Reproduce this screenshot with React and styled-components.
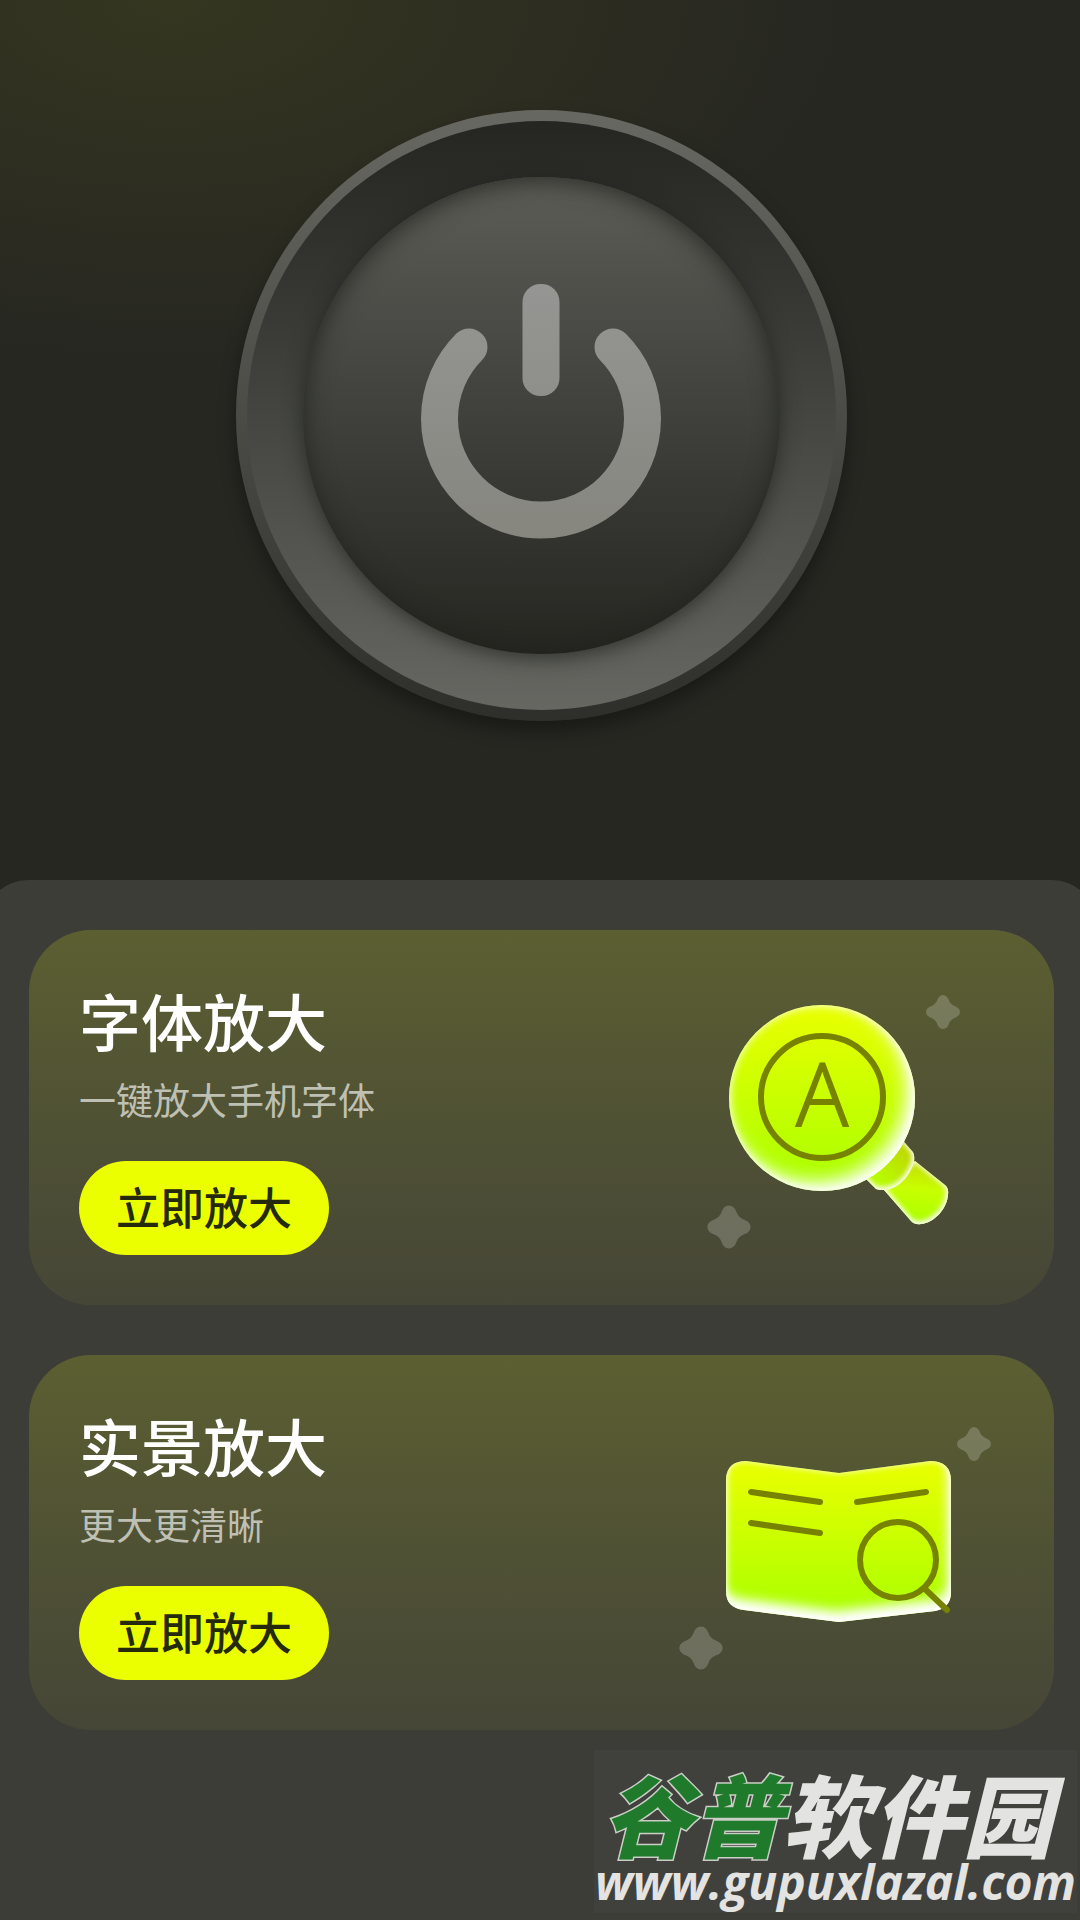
import React from "react";
import styled, { createGlobalStyle } from "styled-components";

const features = [
  {
    id: 1,
    title: "字体放大",
    desc: "一键放大手机字体",
    action: "立即放大",
    art: "font",
  },
  {
    id: 2,
    title: "实景放大",
    desc: "更大更清晰",
    action: "立即放大",
    art: "book",
  },
];

const STAR =
  "M0 -17C3 -17 5 -14.5 6 -11.5C7 -9 9 -7 11.5 -6C14.5 -5 17 -3 17 0C17 3 14.5 5 11.5 6C9 7 7 9 6 11.5C5 14.5 3 17 0 17C-3 17 -5 14.5 -6 11.5C-7 9 -9 7 -11.5 6C-14.5 5 -17 3 -17 0C-17 -3 -14.5 -5 -11.5 -6C-9 -7 -7 -9 -6 -11.5C-5 -14.5 -3 -17 0 -17Z";

// inner white glow, heavier on the lower right side
const Glow = ({ id, dx, dy, blur, rim }) => (
  <filter
    id={id}
    x="-10%"
    y="-10%"
    width="120%"
    height="120%"
    colorInterpolationFilters="sRGB">
    <feOffset in="SourceAlpha" dx={dx} dy={dy} />
    <feGaussianBlur stdDeviation={blur} result="soft" />
    <feFlood floodColor="#fff" />
    <feComposite in2="soft" operator="out" />
    <feComposite in2="SourceAlpha" operator="in" result="main" />
    <feGaussianBlur in="SourceAlpha" stdDeviation={rim} result="rim" />
    <feFlood floodColor="#fff" floodOpacity="0.9" />
    <feComposite in2="rim" operator="out" />
    <feComposite in2="SourceAlpha" operator="in" result="edge" />
    <feMerge>
      <feMergeNode in="SourceGraphic" />
      <feMergeNode in="main" />
      <feMergeNode in="edge" />
    </feMerge>
  </filter>
);

const Lime = ({ id }) => (
  <linearGradient id={id} x1="0" y1="0" x2="0" y2="1">
    <stop offset="0" stopColor="#eaff00" />
    <stop offset="1" stopColor="#a8ff00" />
  </linearGradient>
);

const FontArt = () => (
  <Art viewBox="0 0 360 375" aria-hidden="true">
    <defs>
      <Lime id="lensFill" />
      <linearGradient id="collarFill" x1="1" y1="0" x2="0" y2="1">
        <stop offset="0.2" stopColor="#bfd800" />
        <stop offset="0.7" stopColor="#b8fa00" />
      </linearGradient>
      <linearGradient id="gripFill" x1="0.6" y1="0" x2="0.5" y2="1">
        <stop offset="0" stopColor="#c6dc00" />
        <stop offset="0.45" stopColor="#c8ff00" />
        <stop offset="1" stopColor="#a8ff00" />
      </linearGradient>
      <Glow id="lensGlow" dx={-8} dy={-9} blur={9} rim={4} />
      <Glow id="gripGlow" dx={-1} dy={-2} blur={3} rim={3} />
    </defs>
    <path
      fill="url(#gripFill)"
      filter="url(#gripGlow)"
      d="M255 231L285 255Q289 258 288 265C287 279 274 293 261 294Q255 295 251 291L224 260Z"
    />
    <path
      fill="url(#collarFill)"
      filter="url(#gripGlow)"
      d="M238 205L252 221Q255 224 254 232C251 244 241 256 230 259Q221 261 216 259L200 243Z"
    />
    <circle cx="162" cy="168" r="93" fill="url(#lensFill)" filter="url(#lensGlow)" />
    <circle cx="162" cy="167" r="61" fill="none" stroke="#778300" strokeWidth="6" />
    <Letter x="162" y="196" textAnchor="middle">
      A
    </Letter>
    <Star d={STAR} transform="translate(283 82)" />
    <Star d={STAR} transform="translate(69 297) scale(1.27)" />
  </Art>
);

const BookArt = () => (
  <Art viewBox="0 0 360 375" aria-hidden="true">
    <defs>
      <Lime id="bookFill" />
      <Glow id="bookGlow" dx={-3} dy={-11} blur={6} rim={3} />
    </defs>
    <path
      fill="url(#bookFill)"
      filter="url(#bookGlow)"
      d="M86 106L179 118L270 106Q291 106 291 126V237Q291 253 275 256L179 267L84 255Q66 253 66 236V124Q67 106 86 106Z"
    />
    <g fill="none" stroke="#778300" strokeWidth="6" strokeLinecap="round">
      <path d="M91 137L160 147M91 168L160 178M197 147L266 137" />
      <circle cx="238" cy="205" r="38" />
      <path d="M265 234L287 255" />
    </g>
    <Star d={STAR} transform="translate(314 89)" />
    <Star d={STAR} transform="translate(41 293) scale(1.27)" />
  </Art>
);

const App = () => {
  return (
    <Page>
      <GlobalStyle />
      <Hero>
        <PowerRing type="button" aria-label="power">
          <PowerGroove>
            <PowerFace>
              <svg width="242" height="256" viewBox="0 0 242 256" aria-hidden="true">
                <defs>
                  <linearGradient
                    id="powerFill"
                    gradientUnits="userSpaceOnUse"
                    x1="0"
                    y1="0"
                    x2="0"
                    y2="256">
                    <stop offset="0" stopColor="#959593" />
                    <stop offset="1" stopColor="#86867f" />
                  </linearGradient>
                </defs>
                <g
                  fill="none"
                  stroke="url(#powerFill)"
                  strokeWidth="37"
                  strokeLinecap="round">
                  <path d="M48 64A101.5 101.5 0 1 0 192 64" />
                </g>
                <rect x="101.5" y="1" width="37" height="112" rx="18" fill="url(#powerFill)" />
              </svg>
            </PowerFace>
          </PowerGroove>
        </PowerRing>
      </Hero>
      <Panel>
        {features.map((item) => {
          const { id, title, desc, action, art } = item;
          return (
            <Card key={id}>
              <CardText>
                <Title>{title}</Title>
                <Desc>{desc}</Desc>
                <ActionButton type="button">{action}</ActionButton>
              </CardText>
              {art === "font" ? <FontArt /> : <BookArt />}
            </Card>
          );
        })}
      </Panel>
      <Watermark>
        <SiteName>
          <SiteMark>谷普</SiteMark>软件园
        </SiteName>
        <SiteUrl>www.gupuxlazal.com</SiteUrl>
      </Watermark>
    </Page>
  );
};

const GlobalStyle = createGlobalStyle`
  * {
    box-sizing: border-box;
  }
  body {
    margin: 0;
    background: #3d3d38;
    font-family: "Noto Sans CJK SC", "Noto Sans", sans-serif;
  }
  button {
    font-family: inherit;
    border: none;
    cursor: pointer;
  }
`;

const Page = styled.div`
  position: relative;
  display: flex;
  flex-direction: column;
  min-height: 100vh;
  overflow: hidden;
  background: radial-gradient(
      ellipse 680px 360px at 170px 0,
      #353620 0%,
      #2e2e21 50%,
      #262721 100%
    )
    #262721;
`;

const Hero = styled.header`
  display: flex;
  justify-content: center;
  padding: 110px 0 159px 3px;
`;

const PowerRing = styled.button`
  display: block;
  padding: 11px;
  border-radius: 50%;
  background: linear-gradient(#686862, #2e2f2a);
  box-shadow: 0 10px 18px rgba(0, 0, 0, 0.35);
`;

const PowerGroove = styled.span`
  display: block;
  padding: 56px;
  border-radius: 50%;
  background: linear-gradient(#252622, #353532 28%, #464743 52%, #666761);
`;

const PowerFace = styled.span`
  display: flex;
  align-items: center;
  justify-content: center;
  width: 477px;
  height: 477px;
  padding-bottom: 10px;
  border-radius: 50%;
  background: linear-gradient(#5c5d56, #444540 42%, #252620);
  box-shadow: 0 4px 20px rgba(30, 31, 26, 0.7),
    inset 0 4px 24px rgba(30, 31, 26, 0.8);
`;

const Panel = styled.main`
  display: flex;
  flex-direction: column;
  flex: 1;
  gap: 50px;
  margin: 0 -16px;
  padding: 50px 42px 190px 45px;
  border-radius: 44px 44px 0 0;
  background: #3d3d38;
`;

const Card = styled.section`
  display: flex;
  justify-content: space-between;
  padding: 0 34px 0 50px;
  border-radius: 62px;
  background: linear-gradient(#5c5f31, #515334 45%, #464637);
`;

const CardText = styled.div`
  display: flex;
  flex-direction: column;
  align-items: flex-start;
  padding: 50px 0;
`;

const Title = styled.h2`
  margin: 0;
  font-size: 62px;
  font-weight: 500;
  line-height: 80px;
  color: #fff;
`;

const Desc = styled.p`
  margin: 9px 0 32px;
  font-size: 37px;
  line-height: 60px;
  font-weight: 400;
  color: #bfc0b4;
`;

const ActionButton = styled.button`
  width: 250px;
  height: 94px;
  padding: 0 0 4px;
  border-radius: 47px;
  background: #ecff00;
  color: #262a0c;
  font-size: 44px;
  font-weight: 500;
  line-height: 60px;
`;

const Art = styled.svg`
  flex: none;
  width: 360px;
  height: 375px;
`;

const Letter = styled.text`
  font-family: "Open Sans", sans-serif;
  font-size: 86px;
  font-weight: 300;
  fill: #778300;
  stroke: #778300;
  stroke-width: 2px;
`;

const Star = styled.path`
  fill: rgba(255, 255, 255, 0.2);
`;

const Watermark = styled.footer`
  position: absolute;
  right: 3px;
  bottom: 7px;
  width: 483px;
  height: 163px;
  padding-top: 12px;
  background: #40403d;
  color: #e3e3e1;
  text-align: center;
  white-space: nowrap;
`;

const SiteName = styled.div`
  padding-right: 16px;
  font-size: 90px;
  font-weight: 900;
  font-style: italic;
  line-height: 100px;
`;

const SiteMark = styled.span`
  color: #1f7a2c;
  -webkit-text-stroke: 3px #c9cec6;
  paint-order: stroke fill;
`;

const SiteUrl = styled.div`
  font-family: "Open Sans", sans-serif;
  font-size: 48px;
  font-weight: 700;
  font-style: italic;
  line-height: 40px;
`;

export default App;
